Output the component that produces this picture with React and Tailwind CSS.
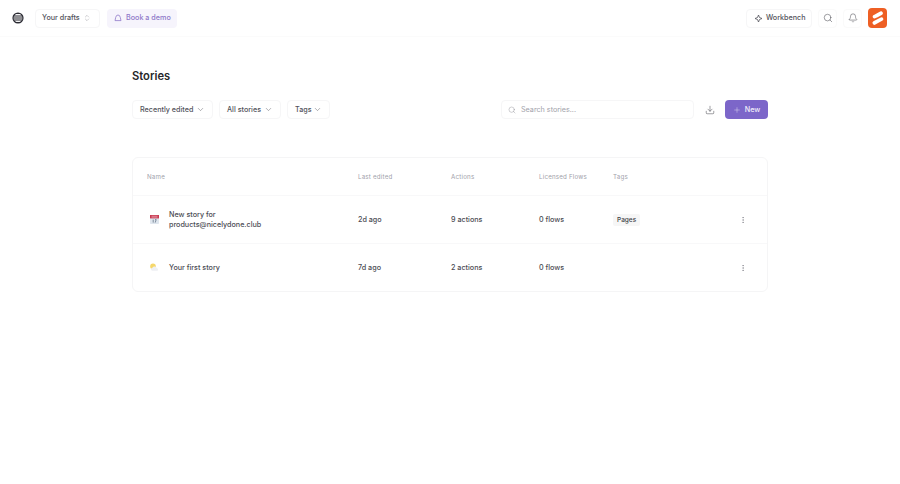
import React from 'react';
import { Search, Bell, ChevronDown, ChevronsUpDown, Plus, Download, EllipsisVertical } from 'lucide-react';

const Logo = () => (
  <svg width="19" height="20" viewBox="0 0 19 20" className="block shrink-0">
    <rect x="0" y="0" width="19" height="20" rx="4" fill="#ee5f24" />
    <path d="M5 7.4 L12.2 3.5 a1.9 1.9 0 0 1 2 3.2 L9.6 9.3 L6.6 10.4 a1.9 1.9 0 0 1 -1.6 -3Z" fill="#fff" />
    <path d="M5.4 13.2 L12.8 9.4 a1.8 1.8 0 0 1 1.8 3.1 L7.4 16.5 a1.8 1.8 0 0 1 -2 -3.3Z" fill="#fff" />
  </svg>
);

const Stack = () => (
  <svg width="12" height="12" viewBox="0 0 12 12" fill="none" stroke="#2b2b33" strokeWidth="1.2" className="shrink-0">
    <circle cx="6" cy="6" r="5" fill="#f4f4f5" />
    <path d="M2 4h8M1.4 6h9.2M2 8h8M4 1.5h4M4 10.5h4" />
  </svg>
);

const Home = () => (
  <svg width="8" height="8" viewBox="0 0 8 8" fill="none" stroke="#8f78c9" strokeWidth="0.8" strokeLinejoin="round" className="shrink-0">
    <path d="M1 6.6 L1.7 3.4 Q2.2 1 4 1 Q5.8 1 6.3 3.4 L7 6.6Z" />
  </svg>
);

const Sparkle = () => (
  <svg width="9" height="9" viewBox="0 0 9 9" fill="none" stroke="#52525b" strokeWidth="0.8" strokeLinejoin="round" className="shrink-0">
    <path d="M4.5 1 L5.5 3.5 L8 4.5 L5.5 5.5 L4.5 8 L3.5 5.5 L1 4.5 L3.5 3.5Z" />
  </svg>
);

const Calendar = () => (
  <svg width="11" height="11" viewBox="0 0 11 11" className="shrink-0">
    <rect x="1" y="1" width="9" height="9" rx="0.8" fill="#dfe6ee" />
    <rect x="1" y="1" width="9" height="3.4" fill="#c93a52" />
    <path d="M2.5 2.2h6M2.5 3.2h6" stroke="#f0c5cc" strokeWidth="0.5" />
    <path d="M4.2 5.6v3M6 5.6h1.2L6.2 8.6" stroke="#56657a" strokeWidth="0.7" fill="none" />
  </svg>
);

const SunCloud = () => (
  <svg width="11" height="9" viewBox="0 0 11 9" className="shrink-0">
    <circle cx="4" cy="3.4" r="2.8" fill="#f5d76a" />
    <path d="M3 7.8 a1.6 1.6 0 0 1 0.4 -3.1 a2.4 2.4 0 0 1 4.4 0.6 a1.3 1.3 0 0 1 0.5 2.5Z" fill="#eef0f3" />
  </svg>
);

const Btn = ({ children, className = '' }) => (
  <div className={`flex items-center h-[19px] rounded-[4px] border border-[#f6f6f7] bg-white text-[#52525b] text-[7.2px] leading-[10px] font-medium whitespace-nowrap ${className}`}>
    {children}
  </div>
);

const Row = ({ icon, name, edited, actions, tag, h }) => (
  <div className={`flex items-center border-t border-[#f8f8f9] text-[7.2px] leading-[10px] font-medium text-[#4b4b53] whitespace-nowrap ${h}`}>
    <div className="w-[225px] shrink-0 flex items-center pl-[16px]">
      <div className="w-[20px] shrink-0 flex justify-start">{icon}</div>
      <div className="w-[110px]">{name}</div>
    </div>
    <div className="w-[93px] shrink-0">{edited}</div>
    <div className="w-[88px] shrink-0">{actions}</div>
    <div className="w-[74px] shrink-0">0 flows</div>
    <div className="w-[126px] shrink-0">
      {tag && <span className="flex w-fit items-center h-[12px] px-[4px] rounded-[2px] bg-[#f6f6f6] text-[6.5px] text-[#3f3f46]">{tag}</span>}
    </div>
    <EllipsisVertical size={8} strokeWidth={1.5} className="text-[#71717a] shrink-0" />
  </div>
);

export default function App() {
  return (
    <div className="w-[900px] h-[484px] bg-white overflow-hidden" style={{ fontFamily: 'Inter, "Liberation Sans", sans-serif' }}>
      <header className="h-[37px] border-b border-[#fbfbfb] flex items-center pl-[12px] pr-[13px]">
        <Stack />
        <Btn className="ml-[11px] px-[6px] w-[65px]">
          <span>Your drafts</span>
          <ChevronsUpDown size={8} strokeWidth={1} className="ml-auto mr-[2px] text-[#71717a] shrink-0" />
        </Btn>
        <div className="ml-[7px] flex items-center h-[19px] w-[70px] px-[7px] rounded-[4px] bg-[#f6f4fc] text-[#8f78c9] text-[7.2px] leading-[10px] font-medium whitespace-nowrap">
          <Home />
          <span className="ml-[4px]">Book a demo</span>
        </div>
        <Btn className="ml-auto pl-[7px] w-[66px]">
          <Sparkle />
          <span className="ml-[3px]">Workbench</span>
        </Btn>
        <div className="ml-[6px] w-[19px] h-[19px] flex items-center justify-center rounded-[4px] border border-[#fafafa]">
          <Search size={10} strokeWidth={1.2} className="text-[#3f3f46]" />
        </div>
        <div className="ml-[6px] w-[19px] h-[19px] flex items-center justify-center rounded-[4px] border border-[#fafafa]">
          <Bell size={10} strokeWidth={1.2} className="text-[#3f3f46]" />
        </div>
        <div className="ml-[6px]"><Logo /></div>
      </header>

      <main className="w-[636px] mx-auto">
        <h1 className="mt-[31px] text-[11.2px] leading-[16px] font-semibold text-[#27272a]">Stories</h1>

        <div className="mt-[16px] flex items-center">
          <Btn className="w-[81px] px-[7px]">
            <span>Recently edited</span>
            <ChevronDown size={9} strokeWidth={1.2} className="ml-auto shrink-0" />
          </Btn>
          <Btn className="ml-[6px] w-[62px] px-[7px]">
            <span>All stories</span>
            <ChevronDown size={9} strokeWidth={1.2} className="ml-auto shrink-0" />
          </Btn>
          <Btn className="ml-[6px] w-[43px] px-[7px]">
            <span>Tags</span>
            <ChevronDown size={9} strokeWidth={1.2} className="ml-auto shrink-0" />
          </Btn>
          <div className="ml-auto flex items-center h-[19px] w-[193px] px-[6px] rounded-[4px] border border-[#f6f6f7] text-[#a1a1aa] text-[7.2px] leading-[10px] whitespace-nowrap">
            <Search size={8} strokeWidth={1} className="text-[#71717a] shrink-0" />
            <span className="ml-[5px]">Search stories...</span>
          </div>
          <div className="ml-[6px] w-[19px] h-[19px] flex items-center justify-center">
            <Download size={10} strokeWidth={1.2} className="text-[#3f3f46]" />
          </div>
          <div className="ml-[6px] w-[43px] h-[19px] flex items-center justify-center rounded-[4px] bg-[#7c66c9] text-[#f3f0fb] text-[7.2px] leading-[10px] font-medium">
            <Plus size={8} strokeWidth={1.2} className="shrink-0" />
            <span className="ml-[4px]">New</span>
          </div>
        </div>

        <div className="mt-[38px] h-[135px] rounded-[6px] border border-[#f5f5f6] flex flex-col">
          <div className="h-[37px] flex items-center text-[6.2px] leading-[10px] text-[#a1a1aa] tracking-[0.2px] whitespace-nowrap">
            <div className="w-[225px] pl-[14px] shrink-0">Name</div>
            <div className="w-[93px] shrink-0">Last edited</div>
            <div className="w-[88px] shrink-0">Actions</div>
            <div className="w-[74px] shrink-0">Licensed Flows</div>
            <div>Tags</div>
          </div>
          <Row h="h-[48px]" icon={<Calendar />} name={<>New story for<br />products@nicelydone.club</>} edited="2d ago" actions="9 actions" tag="Pages" />
          <Row h="flex-1" icon={<SunCloud />} name="Your first story" edited="7d ago" actions="2 actions" />
        </div>
      </main>
    </div>
  );
}
